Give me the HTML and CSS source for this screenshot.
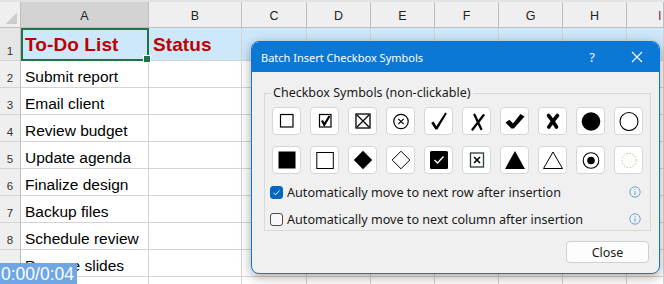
FILE: index.html
```html
<!DOCTYPE html>
<html lang="en">
<head>
  <meta charset="UTF-8" />
  <title>To-Do List - Batch Insert Checkbox Symbols</title>
  <link rel="stylesheet" href="styles.css">
</head>
<body>
  <div class="sheet">
    <div class="row head">
      <div class="corner"></div>
      <div class="sel">A</div><div>B</div><div>C</div><div>D</div><div>E</div>
      <div>F</div><div>G</div><div>H</div><div class="cut">I</div>
    </div>
    <div class="row row1">
      <div class="num">1</div>
      <div class="cell title active">To-Do List</div>
      <div class="cell title">Status</div>
      <div></div><div></div><div></div><div></div><div></div><div></div><div></div>
    </div>
    <div class="row"><div class="num">2</div><div class="cell">Submit report</div><div></div><div></div><div></div><div></div><div></div><div></div><div></div><div></div></div>
    <div class="row"><div class="num">3</div><div class="cell">Email client</div><div></div><div></div><div></div><div></div><div></div><div></div><div></div><div></div></div>
    <div class="row"><div class="num">4</div><div class="cell">Review budget</div><div></div><div></div><div></div><div></div><div></div><div></div><div></div><div></div></div>
    <div class="row"><div class="num">5</div><div class="cell">Update agenda</div><div></div><div></div><div></div><div></div><div></div><div></div><div></div><div></div></div>
    <div class="row"><div class="num">6</div><div class="cell">Finalize design</div><div></div><div></div><div></div><div></div><div></div><div></div><div></div><div></div></div>
    <div class="row"><div class="num">7</div><div class="cell">Backup files</div><div></div><div></div><div></div><div></div><div></div><div></div><div></div><div></div></div>
    <div class="row"><div class="num">8</div><div class="cell">Schedule review</div><div></div><div></div><div></div><div></div><div></div><div></div><div></div><div></div></div>
    <div class="row"><div class="num">9</div><div class="cell">Prepare slides</div><div></div><div></div><div></div><div></div><div></div><div></div><div></div><div></div></div>
    <div class="row"><div class="num"></div><div></div><div></div><div></div><div></div><div></div><div></div><div></div><div></div><div></div></div>
  </div>

  <div class="dialog">
    <div class="dlg-title">
      <span class="dlg-name">Batch Insert Checkbox Symbols</span>
      <span class="dlg-help">?</span>
      <svg class="dlg-close" width="12" height="12" viewBox="0 0 12 12"><path d="M1 1L11 11M11 1L1 11" stroke="#fff" stroke-width="1.1"/></svg>
    </div>

    <fieldset class="group">
      <legend>Checkbox Symbols (non-clickable)</legend>
      <div class="symbols">
        <button><svg viewBox="0 0 20 20"><rect x="3.5" y="3.5" width="12.5" height="12.5" fill="none" stroke="#000" stroke-width="1.2"/></svg></button>
        <button><svg viewBox="0 0 20 20"><rect x="4.5" y="3.5" width="11.5" height="12.5" fill="none" stroke="#000" stroke-width="1.2"/><path d="M7 9.5L9.3 13.8L14.5 5" fill="none" stroke="#000" stroke-width="2.2"/></svg></button>
        <button><svg viewBox="0 0 20 20"><rect x="3" y="3" width="14" height="14" fill="none" stroke="#000" stroke-width="1.3"/><path d="M4 4L16 16M16 4L4 16" stroke="#000" stroke-width="1.3"/></svg></button>
        <button><svg viewBox="0 0 20 20"><circle cx="10" cy="10.5" r="7.2" fill="none" stroke="#000" stroke-width="1.2"/><path d="M7.3 7.8L12.7 13.2M12.7 7.8L7.3 13.2" stroke="#000" stroke-width="1.2"/></svg></button>
        <button><svg viewBox="0 0 20 20"><path d="M2.2 12L4.6 10.6L7.4 15.2L16.2 1.6L17.8 2.6L8.4 18.6L6.4 18.6Z"/></svg></button>
        <button><svg viewBox="0 0 20 20"><path d="M7.5 3.8L14.2 18M16.5 4.2L5.5 18.5" fill="none" stroke="#000" stroke-width="2.3" stroke-linecap="round"/></svg></button>
        <button><svg viewBox="0 0 20 20"><path d="M0.5 11.5L4.5 8.8L8 12.5L15.5 3L19.5 5.5L8.8 17.5L6.3 17.5Z"/></svg></button>
        <button><svg viewBox="0 0 20 20"><path d="M5.5 4.5C8.5 8 11 12 13.5 16M14.5 4.5C11.5 8 8.5 12 5.8 16" fill="none" stroke="#000" stroke-width="3.6" stroke-linecap="round"/></svg></button>
        <button><svg viewBox="0 0 20 20"><circle cx="10" cy="10.5" r="9.3"/></svg></button>
        <button><svg viewBox="0 0 20 20"><circle cx="10" cy="10.5" r="9" fill="none" stroke="#000" stroke-width="1.1"/></svg></button>

        <button><svg viewBox="0 0 20 20"><rect x="1.5" y="1.5" width="17" height="17"/></svg></button>
        <button><svg viewBox="0 0 20 20"><rect x="1.8" y="2.5" width="16.5" height="16" fill="#fff" stroke="#000" stroke-width="1"/></svg></button>
        <button><svg viewBox="0 0 20 20"><path d="M10 0.8L19.2 10L10 19.2L0.8 10Z"/></svg></button>
        <button><svg viewBox="0 0 20 20"><path d="M10 1.2L18.8 10L10 18.8L1.2 10Z" fill="#fff" stroke="#000" stroke-width="1"/></svg></button>
        <button><svg viewBox="0 0 20 20"><rect x="1" y="1" width="18" height="18" rx="1.5"/><path d="M5.5 10L8.5 13L14.5 6.5" fill="none" stroke="#fff" stroke-width="1.4"/></svg></button>
        <button><svg viewBox="0 0 20 20"><rect x="3.5" y="3" width="13" height="14" fill="#fff" stroke="#2b3b3f" stroke-width="1.3"/><path d="M7 7L13 13M13 7L7 13" stroke="#000" stroke-width="1.6"/></svg></button>
        <button><svg viewBox="0 0 20 20"><path d="M10 1L20 19H0Z"/></svg></button>
        <button><svg viewBox="0 0 20 20"><path d="M10 2L19.5 18.5H0.5Z" fill="#fff" stroke="#000" stroke-width="1"/></svg></button>
        <button><svg viewBox="0 0 20 20"><circle cx="10" cy="10.5" r="7.8" fill="none" stroke="#000" stroke-width="1.1"/><circle cx="10" cy="10.5" r="3.8"/></svg></button>
        <button><svg viewBox="0 0 20 20"><circle cx="10" cy="10.5" r="7.2" fill="none" stroke="#c9a77a" stroke-width="1" stroke-dasharray="1.3 1.8"/></svg></button>
      </div>

      <label class="option">
        <span class="box checked"><svg width="13" height="13" viewBox="0 0 13 13"><path d="M3.5 6.8L5.5 8.8L9.6 4.4" fill="none" stroke="#fff" stroke-width="1"/></svg></span>
        Automatically move to next row after insertion
        <svg class="info" width="12" height="12" viewBox="0 0 12 12"><circle cx="6" cy="6" r="5.2" fill="none" stroke="#6aa1d8" stroke-width="1"/><path d="M6 5.2V9M6 3.2V4.2" stroke="#6aa1d8" stroke-width="1"/></svg>
      </label>
      <label class="option">
        <span class="box"></span>
        Automatically move to next column after insertion
        <svg class="info" width="12" height="12" viewBox="0 0 12 12"><circle cx="6" cy="6" r="5.2" fill="none" stroke="#6aa1d8" stroke-width="1"/><path d="M6 5.2V9M6 3.2V4.2" stroke="#6aa1d8" stroke-width="1"/></svg>
      </label>
    </fieldset>

    <div class="dlg-foot">
      <button class="close-btn">Close</button>
    </div>
  </div>

  <div class="timer">0:00/0:04</div>
</body>
</html>
```

FILE: styles.css
```css
:root {
  --grid: #d4d4d4;
  --head-bg: #efefef;
  --head-line: #bdbdbd;
  --row-blue: #cde8fa;
  --excel-green: #217346;
  --win-blue: #0a78d4;
  --dlg-bg: #f0f0f0;
  --ui-font: "Noto Sans", "Open Sans", sans-serif;
}

* {
  box-sizing: border-box;
}

body {
  margin: 0;
  width: 664px;
  height: 284px;
  overflow: hidden;
  position: relative;
  background: #fff;
  font-family: "Liberation Sans", Arial, sans-serif;
}

/* spreadsheet */
.sheet {
  display: flex;
  flex-direction: column;
}

.row {
  display: grid;
  grid-template-columns: 21px 128px 93px 65px 64px 64px 64px 64px 64px 1fr;
  height: 27px;
  flex-shrink: 0;
}

.row > div {
  border-right: 1px solid var(--grid);
  border-bottom: 1px solid var(--grid);
}

.head {
  height: 28px;
  background: var(--head-bg);
  border-top: 2px solid #e2e2e2;
}

.head > div {
  display: flex;
  align-items: center;
  justify-content: center;
  padding-top: 2px;
  font-size: 12.5px;
  color: #222;
  border-right-color: var(--head-line);
  border-bottom-color: var(--head-line);
}

.head .sel {
  background: #d3d3d3;
}

.head .cut {
  justify-content: flex-start;
  padding-left: 31px;
  color: #7a1f5c;
}

.corner {
  background: linear-gradient(to bottom right, transparent 50%, #cdcdcd 50%) no-repeat right 3px bottom 3px / 11px 11px;
}

.row1 {
  height: 33px;
  background: var(--row-blue);
}

.num {
  display: flex;
  align-items: flex-end;
  justify-content: center;
  padding-bottom: 3px;
  font-size: 11.5px;
  color: #333;
  background: var(--head-bg);
  border-right-color: var(--head-line) !important;
}

.row1 .num {
  background: #e6e6e6;
}

.cell {
  display: flex;
  align-items: flex-end;
  padding: 0 0 1px 4px;
  font-size: 15.5px;
  line-height: 18px;
  color: #000;
  white-space: nowrap;
}

.cell.title {
  padding-bottom: 4px;
  font-size: 19px;
  line-height: 22px;
  font-weight: bold;
  color: #c00000;
  letter-spacing: 0.1px;
}

.cell.active {
  position: relative;
  outline: 2px solid var(--excel-green);
  outline-offset: -2px;
}

.cell.active::after {
  content: "";
  position: absolute;
  right: -3px;
  bottom: -3px;
  width: 6px;
  height: 6px;
  background: var(--excel-green);
  border: 1px solid #fff;
}

/* dialog */
.dialog {
  position: absolute;
  left: 251px;
  top: 41px;
  width: 409px;
  height: 233px;
  display: flex;
  flex-direction: column;
  background: var(--dlg-bg);
  border: 1px solid var(--win-blue);
  border-radius: 8px;
  overflow: hidden;
  box-shadow: 0 3px 12px rgba(0, 0, 0, 0.35);
  font-family: var(--ui-font);
  color: #1a1a1a;
}

.dlg-title {
  display: flex;
  align-items: center;
  height: 30px;
  padding: 0 0 0 9px;
  background: var(--win-blue);
  color: #fff;
  font-size: 11px;
}

.dlg-name {
  flex: 1;
}

.dlg-help {
  margin-right: 36px;
  font-size: 13px;
}

.dlg-close {
  margin: 0 16px 0 0;
}

.group {
  margin: 13px 8px 0 12px;
  padding: 6px 7px 0;
  border: 1px solid #d9d9d9;
  min-width: 0;
}

.group legend {
  margin-left: -1px;
  padding: 0 2px;
  font-size: 12.5px;
  line-height: 16px;
}

.symbols {
  display: grid;
  grid-template-columns: repeat(10, 29px);
  grid-auto-rows: 28px;
  column-gap: 9px;
  row-gap: 11px;
}

.symbols button {
  display: flex;
  align-items: center;
  justify-content: center;
  padding: 0;
  background: #fff;
  border: 1px solid #d6d6d6;
  border-radius: 4px;
}

.symbols svg {
  width: 20px;
  height: 20px;
}

.option {
  display: flex;
  align-items: center;
  height: 22px;
  margin: 7px 0 0 -2px;
  font-size: 12.6px;
  white-space: nowrap;
}

.option + .option {
  margin-top: 5px;
}

.box {
  width: 13px;
  height: 13px;
  margin-right: 4px;
  border: 1px solid #4d4d4d;
  border-radius: 3px;
  background: #f8f8f8;
}

.box.checked {
  border-color: #0067c0;
  background: #0067c0;
}

.box.checked svg {
  display: block;
  margin: -1px;
}

.info {
  margin-left: auto;
  margin-right: 2px;
}

.dlg-foot {
  display: flex;
  justify-content: flex-end;
  padding: 10px 10px 0 0;
}

.close-btn {
  width: 83px;
  height: 22px;
  padding: 0;
  background: #fdfdfd;
  border: 1px solid #d0d0d0;
  border-radius: 4px;
  font-family: var(--ui-font);
  font-size: 12.5px;
  color: #1a1a1a;
}

.timer {
  position: absolute;
  left: 0;
  bottom: 0;
  width: 77px;
  height: 21px;
  padding-left: 1px;
  background: #6ea6e6;
  color: #fff;
  font-size: 17.5px;
  line-height: 22px;
  white-space: nowrap;
}
```
